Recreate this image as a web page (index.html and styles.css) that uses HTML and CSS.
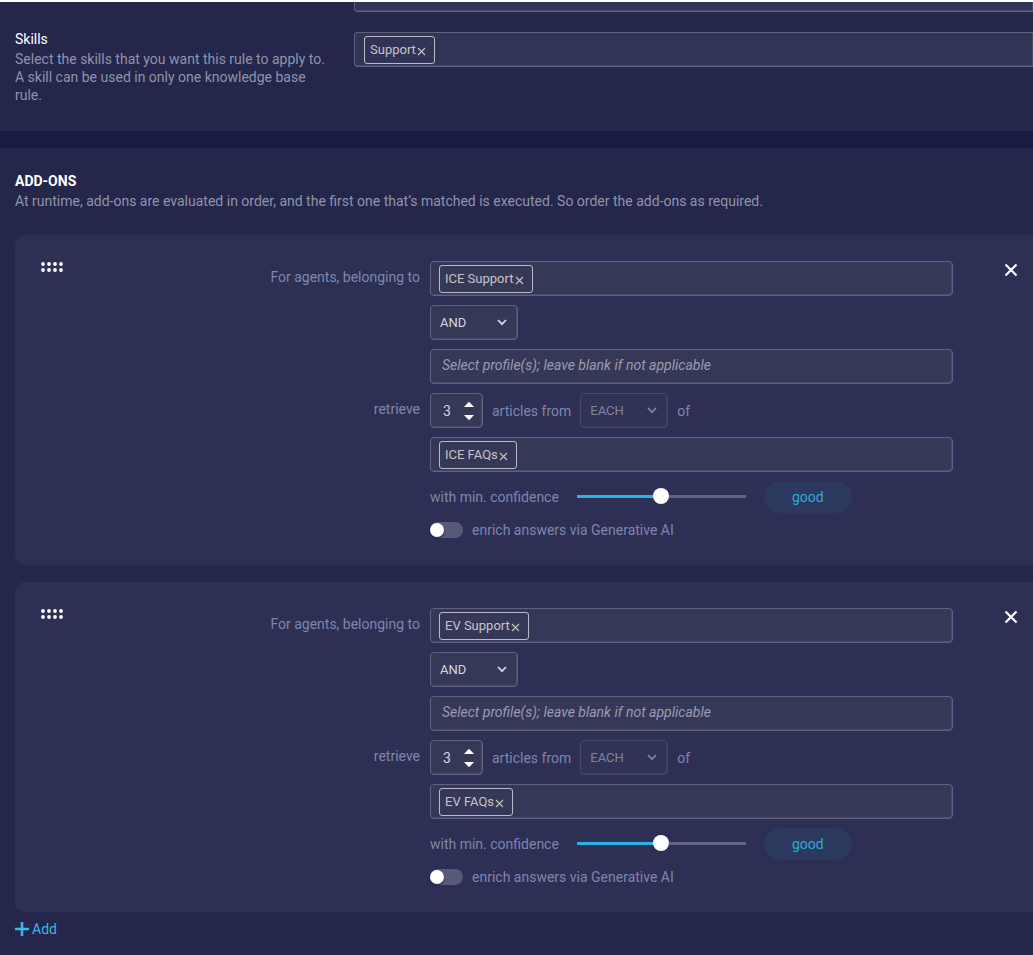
FILE: index.html
```html
<!DOCTYPE html>
<html lang="en">
<head>
<meta charset="utf-8">
<title>Knowledge base rule</title>
<link rel="stylesheet" href="styles.css">
</head>
<body>
<svg class="sprite" aria-hidden="true">
  <symbol id="cross" viewBox="0 0 9 9"><path d="M1 1l7 7M8 1l-7 7" fill="none" stroke="currentColor" stroke-width="1.1"/></symbol>
  <symbol id="close" viewBox="0 0 14 14"><path d="M1.5 1.5l11 11M12.5 1.5l-11 11" fill="none" stroke="currentColor" stroke-width="2.2"/></symbol>
  <symbol id="chevron" viewBox="0 0 10 7"><path d="M1 1l4 4.2L9 1" fill="none" stroke="currentColor" stroke-width="1.8"/></symbol>
  <symbol id="up" viewBox="0 0 10 5"><path d="M0 5L4.2 .4Q5-.3 5.8.4L10 5z" fill="currentColor"/></symbol>
  <symbol id="down" viewBox="0 0 10 5"><path d="M0 0L4.2 4.6Q5 5.3 5.8 4.6L10 0z" fill="currentColor"/></symbol>
  <symbol id="plus" viewBox="0 0 14 14"><path d="M7 0v14M0 7h14" fill="none" stroke="currentColor" stroke-width="2.6"/></symbol>
  <symbol id="grip" viewBox="0 0 22 10"><g fill="currentColor"><circle cx="2" cy="2" r="1.9"/><circle cx="8" cy="2" r="1.9"/><circle cx="14" cy="2" r="1.9"/><circle cx="20" cy="2" r="1.9"/><circle cx="2" cy="8" r="1.9"/><circle cx="8" cy="8" r="1.9"/><circle cx="14" cy="8" r="1.9"/><circle cx="20" cy="8" r="1.9"/></g></symbol>
</svg>
<main class="page">
  <section class="settings">
    <div class="field field-cut"></div>
    <div class="setting-text">
      <label class="setting-title" for="skills">Skills</label>
      <p class="note">Select the skills that you want this rule to apply to. A skill can be used in only one knowledge base rule.</p>
    </div>
    <div class="field">
      <span class="chip">Support<button class="chip-remove" aria-label="Remove Support"><svg width="9" height="9"><use href="#cross"/></svg></button></span>
      <input class="field-input" id="skills" type="text">
    </div>
  </section>
  <section class="addons">
    <h2 class="heading">ADD-ONS</h2>
    <p class="note">At runtime, add-ons are evaluated in order, and the first one that’s matched is executed. So order the add-ons as required.</p>
    <div class="cards">
      <article class="card">
        <button class="grip" aria-label="Reorder"><svg width="22" height="10"><use href="#grip"/></svg></button>
        <label class="row-label" for="agents1">For agents, belonging to</label>
        <div class="field">
          <span class="chip">ICE Support<button class="chip-remove" aria-label="Remove ICE Support"><svg width="9" height="9"><use href="#cross"/></svg></button></span>
          <input class="field-input" id="agents1" type="text">
        </div>
        <button class="close" aria-label="Delete add-on"><svg width="14" height="14"><use href="#close"/></svg></button>
        <div class="control picker">
          <select class="select" aria-label="Operator"><option>AND</option></select>
          <svg class="chevron" width="10" height="7"><use href="#chevron"/></svg>
        </div>
        <input class="control profile" type="text" placeholder="Select profile(s); leave blank if not applicable" aria-label="Profiles">
        <label class="row-label" for="count1">retrieve</label>
        <div class="control line">
          <div class="stepper">
            <input class="count" id="count1" type="number" value="3">
            <div class="steps">
              <button class="step" aria-label="Increase"><svg width="10" height="5"><use href="#up"/></svg></button>
              <button class="step" aria-label="Decrease"><svg width="10" height="5"><use href="#down"/></svg></button>
            </div>
          </div>
          <span>articles from</span>
          <div class="picker picker-off">
            <select class="select" aria-label="Sources" disabled><option>EACH</option></select>
            <svg class="chevron" width="10" height="7"><use href="#chevron"/></svg>
          </div>
          <span>of</span>
        </div>
        <div class="field control">
          <span class="chip">ICE FAQs<button class="chip-remove" aria-label="Remove ICE FAQs"><svg width="9" height="9"><use href="#cross"/></svg></button></span>
          <input class="field-input" type="text" aria-label="Knowledge bases">
        </div>
        <div class="control confidence">
          <label for="conf1">with min. confidence</label>
          <input class="slider" id="conf1" type="range" value="50">
          <output class="pill">good</output>
        </div>
        <div class="control enrich">
          <input class="toggle" id="enrich1" type="checkbox" role="switch">
          <label for="enrich1">enrich answers via Generative AI</label>
        </div>
      </article>
      <article class="card">
        <button class="grip" aria-label="Reorder"><svg width="22" height="10"><use href="#grip"/></svg></button>
        <label class="row-label" for="agents2">For agents, belonging to</label>
        <div class="field">
          <span class="chip">EV Support<button class="chip-remove" aria-label="Remove EV Support"><svg width="9" height="9"><use href="#cross"/></svg></button></span>
          <input class="field-input" id="agents2" type="text">
        </div>
        <button class="close" aria-label="Delete add-on"><svg width="14" height="14"><use href="#close"/></svg></button>
        <div class="control picker">
          <select class="select" aria-label="Operator"><option>AND</option></select>
          <svg class="chevron" width="10" height="7"><use href="#chevron"/></svg>
        </div>
        <input class="control profile" type="text" placeholder="Select profile(s); leave blank if not applicable" aria-label="Profiles">
        <label class="row-label" for="count2">retrieve</label>
        <div class="control line">
          <div class="stepper">
            <input class="count" id="count2" type="number" value="3">
            <div class="steps">
              <button class="step" aria-label="Increase"><svg width="10" height="5"><use href="#up"/></svg></button>
              <button class="step" aria-label="Decrease"><svg width="10" height="5"><use href="#down"/></svg></button>
            </div>
          </div>
          <span>articles from</span>
          <div class="picker picker-off">
            <select class="select" aria-label="Sources" disabled><option>EACH</option></select>
            <svg class="chevron" width="10" height="7"><use href="#chevron"/></svg>
          </div>
          <span>of</span>
        </div>
        <div class="field control">
          <span class="chip">EV FAQs<button class="chip-remove" aria-label="Remove EV FAQs"><svg width="9" height="9"><use href="#cross"/></svg></button></span>
          <input class="field-input" type="text" aria-label="Knowledge bases">
        </div>
        <div class="control confidence">
          <label for="conf2">with min. confidence</label>
          <input class="slider" id="conf2" type="range" value="50">
          <output class="pill">good</output>
        </div>
        <div class="control enrich">
          <input class="toggle" id="enrich2" type="checkbox" role="switch">
          <label for="enrich2">enrich answers via Generative AI</label>
        </div>
      </article>
    </div>
    <button class="add"><svg width="14" height="14"><use href="#plus"/></svg>Add</button>
  </section>
</main>
</body>
</html>
```
FILE: styles.css
```css
* { box-sizing: border-box; }
body {
  margin: 0;
  background: #24264b;
  color: #9193ab;
  font: 14px/18px Roboto, "Liberation Sans", sans-serif;
}
button, input, select { font: inherit; color: inherit; }
button { padding: 0; border: 0; background: none; cursor: pointer; }
svg { display: block; }
h2, p { margin: 0; }
.sprite { position: absolute; width: 0; height: 0; }
.page { border-top: 2px solid #fff; }

.settings {
  display: grid;
  grid-template-columns: 315px minmax(0, 1fr);
  column-gap: 24px;
  padding: 0 0 27px 15px;
  border-bottom: 17px solid #1a1c43;
}
.setting-title { display: block; margin-bottom: 2px; color: #fff; }
.setting-text { margin-top: -2px; }

.field {
  display: flex;
  align-items: center;
  height: 35px;
  padding: 0 9px 0 8px;
  border: 1px solid #5f617f;
  border-radius: 4px;
  background: #363858;
  box-shadow: inset -1px -1px 1px #4a4c6b;
}
.settings .field { padding-left: 9px; border-right: 0; border-radius: 4px 0 0 4px; background: #313457; }
.settings .field-cut { grid-column: 2; height: 10px; margin-bottom: 20px; border-top: 0; border-radius: 0 0 0 4px; }
.field-input { flex: 1; min-width: 0; border: 0; outline: 0; background: none; }
.chip {
  display: flex;
  align-items: center;
  height: 28px;
  padding: 0 8px 0 5px;
  border: 1px solid #b9bac7;
  border-radius: 3px;
  color: #c5c5c8;
  font-size: 13px;
}
.chip-remove { margin: 3px 0 0 1px; }

.addons { padding: 24px 0 17px 15px; }
.heading { margin-bottom: 2px; color: #fff; font: inherit; font-weight: 700; }
.cards { display: flex; flex-direction: column; gap: 17px; margin-top: 25px; }
.card {
  display: grid;
  grid-template-columns: 22px 347px minmax(0, 1fr) 70px;
  gap: 9px 10px;
  padding: 26px 0 27px 26px;
  border-radius: 10px 0 0 10px;
  background: #2d2f55;
  color: #7f86ad;
}
.grip { align-self: start; margin-top: 1px; color: #fff; cursor: grab; }
.row-label { grid-column: 2; padding-top: 7px; text-align: right; }
.control { grid-column: 3; }
.close { align-self: start; justify-self: end; margin: 2px 15px 0 0; color: #fff; }
.picker {
  display: grid;
  align-items: center;
  width: 88px;
  height: 35px;
  color: #d5d6df;
}
.select {
  grid-area: 1 / 1;
  width: 100%;
  height: 100%;
  padding: 0 9px;
  appearance: none;
  border: 1px solid #5f617f;
  border-radius: 4px;
  background: #363858;
  box-shadow: inset -1px -1px 1px #4a4c6b;
  font-size: 13px;
}
.chevron { grid-area: 1 / 1; justify-self: end; margin-right: 11px; pointer-events: none; }
.picker-off { opacity: .5; }
.select:disabled { opacity: 1; color: #d5d6df; }
.profile {
  width: 100%;
  height: 35px;
  padding: 0 11px 4px;
  border: 1px solid #5f617f;
  border-radius: 4px;
  background: #363858;
  box-shadow: inset -1px -1px 1px #4a4c6b;
  font-size: 14px;
  font-style: italic;
}
.profile::placeholder { color: #9a9bb0; opacity: 1; }
.line { display: flex; align-items: center; gap: 9px; }
.stepper {
  display: flex;
  align-items: center;
  width: 53px;
  height: 35px;
  padding: 0 8px 0 12px;
  border: 1px solid #5f617f;
  border-radius: 4px;
  background: #363858;
  box-shadow: inset -1px -1px 1px #4a4c6b;
}
.count {
  flex: 1;
  min-width: 0;
  padding: 0;
  border: 0;
  outline: 0;
  background: none;
  color: #d5d6df;
  appearance: textfield;
}
.count::-webkit-inner-spin-button { appearance: none; }
.steps { display: flex; flex-direction: column; gap: 8px; color: #fff; }
.confidence { display: flex; align-items: center; gap: 18px; }
.slider {
  width: 169px;
  height: 16px;
  margin: 0 0 2px;
  appearance: none;
  background: linear-gradient(90deg, #27b4e5 50%, #626382 50%) center / 100% 3px no-repeat;
}
.slider::-webkit-slider-thumb {
  appearance: none;
  width: 16px;
  height: 16px;
  border-radius: 50%;
  background: #fff;
}
.pill {
  width: 88px;
  padding: 7px 0;
  border-radius: 16px;
  background: #2b395f;
  color: #2fa9d8;
  text-align: center;
}
.enrich { display: flex; align-items: center; gap: 9px; line-height: 16px; }
.toggle {
  width: 33px;
  height: 16px;
  margin: 0;
  appearance: none;
  border-radius: 8px;
  background: #575978;
}
.toggle::before {
  content: "";
  display: block;
  width: 14px;
  height: 14px;
  margin-top: 1px;
  border-radius: 50%;
  background: #fff;
  box-shadow: 0 1px 2px #1a1c43;
}
.toggle:checked::before { margin-left: auto; }
.add { display: flex; align-items: center; gap: 3px; margin-top: 8px; color: #3ab8e6; }
```
